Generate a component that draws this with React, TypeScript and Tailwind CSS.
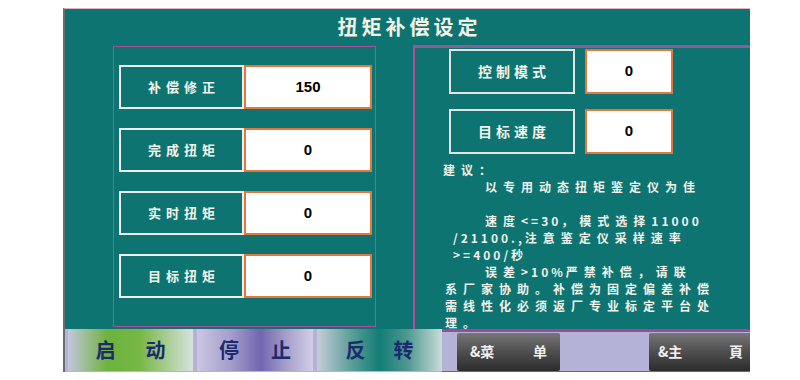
import React from 'react';

const CJK = { fontFamily: '"Noto Sans CJK SC", "Noto Sans", sans-serif' };

const leftRows = [
  { label: '补偿修正', value: '150' },
  { label: '完成扭矩', value: '0' },
  { label: '实时扭矩', value: '0' },
  { label: '目标扭矩', value: '0' },
];

const rightRows = [
  { label: '控制模式', value: '0' },
  { label: '目标速度', value: '0' },
];

// each note line with its left offset inside the right group
const notes: { text: string; pl: string }[] = [
  { text: '建议：', pl: 'pl-[28px]' },
  { text: '以专用动态扭矩鉴定仪为佳', pl: 'pl-[70px]' },
  { text: '\u00a0', pl: 'pl-[28px]' },
  { text: '速度<=30，模式选择11000', pl: 'pl-[70px]' },
  { text: '/21100.,注意鉴定仪采样速率', pl: 'pl-[38px]' },
  { text: '>=400/秒', pl: 'pl-[38px]' },
  { text: '误差>10%严禁补偿，请联', pl: 'pl-[70px]' },
  { text: '系厂家协助。补偿为固定偏差补偿', pl: 'pl-[30px]' },
  { text: '需线性化必须返厂专业标定平台处', pl: 'pl-[30px]' },
  { text: '理。', pl: 'pl-[30px]' },
];

// ascii runs are set tighter than the wide chinese characters
function NoteLine({ text }: { text: string }) {
  const parts = text.split(/([\x21-\x7e]+)/).filter((p) => p.length > 0);
  return (
    <>
      {parts.map((p, i) =>
        /^[\x21-\x7e]+$/.test(p) ? (
          <span key={i} className="tracking-[3px]">
            {p}
          </span>
        ) : (
          <span key={i}>{p}</span>
        )
      )}
    </>
  );
}

function ValueBox({ value, w }: { value: string; w: string }) {
  return (
    <div
      className={`${w} flex items-center justify-center border-2 border-[#e5773d] bg-white text-[15px] font-bold text-black`}
      style={{ fontFamily: '"Liberation Sans", Arial, sans-serif' }}
    >
      {value}
    </div>
  );
}

export default function App() {
  return (
    <div className="h-[380px] w-[800px] bg-white pt-[8px] pl-[63px]" style={CJK}>
      <div className="flex h-[364px] w-[687px] flex-col border-l-2 border-t border-l-[#6c6a72] border-t-[#d8b8b8] bg-[#0d7471]">
        {/* Title */}
        <div className="flex h-[36px] items-center justify-center">
          <span className="pl-[4px] text-[20px] font-bold tracking-[4px] text-[#f4f2e4]">扭矩补偿设定</span>
        </div>

        {/* Body */}
        <div className="flex h-[284px]">
          <div className="w-[348px] pl-[48px] pt-[1px]">
            <div className="flex h-[281px] w-[263px] flex-col gap-[19px] border border-[#a9509f] pl-[5px] pt-[18px]">
              {leftRows.map((row) => (
                <div key={row.label} className="flex h-[44px]">
                  <div className="flex w-[125px] items-center justify-center border-2 border-[#eeeeee] pl-[5px] text-[13px] font-bold tracking-[5px] text-[#f4f4ec]">
                    {row.label}
                  </div>
                  <ValueBox value={row.value} w="w-[128px]" />
                </div>
              ))}
            </div>
          </div>

          <div className="flex-1 border-l-2 border-t-[3px] border-l-[#c2449e] border-t-[#8d5c94] pt-[1px]">
            <div className="flex flex-col gap-[15px] pl-[34px]">
              {rightRows.map((row) => (
                <div key={row.label} className="flex h-[45px] gap-[10px]">
                  <div className="flex w-[126px] items-center justify-center border-2 border-[#e4e4e4] pl-[4px] text-[14px] font-bold tracking-[4px] text-[#f4f4ec]">
                    {row.label}
                  </div>
                  <ValueBox value={row.value} w="w-[88px]" />
                </div>
              ))}
            </div>
            <div className="mt-[7px] text-[12px] font-bold leading-[17px] tracking-[6px] text-[#f2f2ea]">
              {notes.map((n, i) => (
                <div key={i} className={`${n.pl} h-[17px] whitespace-nowrap`}>
                  <NoteLine text={n.text} />
                </div>
              ))}
            </div>
          </div>
        </div>

        {/* Bottom bar */}
        <div className="flex h-[43px] bg-[#b5b2d7]">
          <div className="flex gap-[4px] pl-[3px] pb-[1px]">
            <button className="flex w-[125px] items-center justify-center gap-[30px] bg-[linear-gradient(90deg,#c4c6dc_0%,#6cb23c_32%,#78b848_58%,#d8e2dc_100%)] text-[20px] font-bold text-[#1c2a6e]">
              <span>启</span>
              <span>动</span>
            </button>
            <button className="flex w-[116px] items-center justify-center gap-[32px] bg-[linear-gradient(90deg,#cbc7e2_0%,#a29cca_30%,#7266b0_55%,#a8a2cc_78%,#d2cee6_100%)] text-[20px] font-bold text-[#1c2a6e]">
              <span>停</span>
              <span>止</span>
            </button>
            <button className="flex w-[125px] items-center justify-center gap-[28px] bg-[linear-gradient(90deg,#c6ccd8_0%,#5a9e98_28%,#137d76_50%,#4c9890_72%,#cadcd8_100%)] text-[20px] font-bold text-[#1c2a6e]">
              <span>反</span>
              <span>转</span>
            </button>
          </div>
          <div className="flex flex-1 items-center border-t-[3px] border-b border-[#9b4c98] pl-[15px]">
            <button className="flex h-[38px] w-[103px] items-center justify-between rounded-[2px] bg-[linear-gradient(180deg,#767676_0%,#4a4a4a_55%,#2c2c2c_100%)] pl-[13px] pr-[13px] text-[14px] font-bold text-[#f0f0f0]">
              <span>&amp;菜</span>
              <span>单</span>
            </button>
            <div className="flex-1" />
            <button className="flex h-[38px] w-[101px] items-center justify-between rounded-l-[2px] bg-[linear-gradient(180deg,#767676_0%,#4a4a4a_55%,#2c2c2c_100%)] pl-[9px] pr-[7px] text-[14px] font-bold text-[#f0f0f0]">
              <span>&amp;主</span>
              <span>頁</span>
            </button>
          </div>
        </div>
      </div>
    </div>
  );
}
